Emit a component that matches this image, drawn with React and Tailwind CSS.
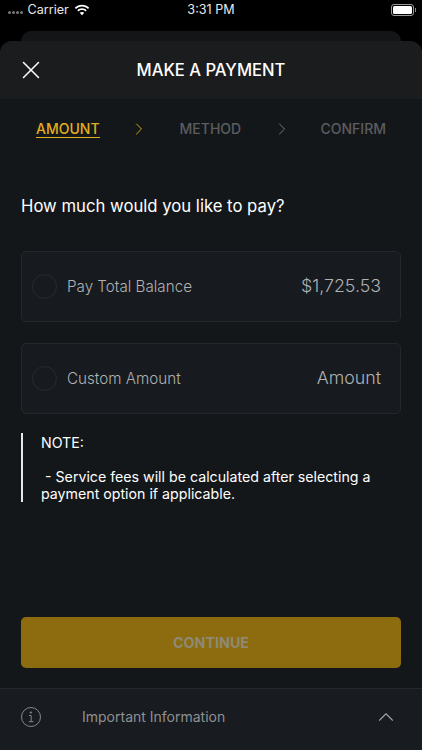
import { X, ChevronRight, ChevronUp } from "lucide-react";

const font = { fontFamily: "Inter, 'Noto Sans', sans-serif" };

const StatusBar = () => (
  <div className="h-[31px] flex items-start pt-[4px] pl-[8px] pr-[6px] relative text-white text-[12.6px] shrink-0">
    <div className="h-[12px] flex items-center gap-[1.5px] mr-[5px] pt-[5px]">
      {[0, 1, 2, 3].map((i) => (
        <span key={i} className="w-[2.5px] h-[2.5px] rounded-full bg-[#777]" />
      ))}
    </div>
    <span className="text-[#e8e8e8] leading-[12px]">Carrier</span>
    <svg width="16" height="12" viewBox="0 0 16 12" className="ml-[5px]" fill="#fff">
      <path d="M8 2.6c2.3 0 4.4.9 6 2.4l1.2-1.3C13.3 1.9 10.8.8 8 .8S2.7 1.9.8 3.7L2 5c1.6-1.5 3.7-2.4 6-2.4z" />
      <path d="M8 6.1c1.3 0 2.5.5 3.5 1.4l1.2-1.3C11.4 5 9.8 4.3 8 4.3S4.6 5 3.3 6.2l1.2 1.3C5.5 6.6 6.7 6.1 8 6.1z" />
      <path d="M8 7.9c-.9 0-1.7.3-2.3.9L8 11.3l2.3-2.5c-.6-.6-1.4-.9-2.3-.9z" />
    </svg>
    <span className="absolute left-0 right-0 text-center text-[#e8e8e8] leading-[12px]">3:31 PM</span>
    <div className="ml-auto flex items-center">
      <div className="w-[23px] h-[12px] rounded-[3px] border border-[#999] p-[1px]">
        <div className="w-full h-full rounded-[1.5px] bg-white" />
      </div>
      <div className="w-[1px] h-[4px] bg-[#888] ml-[1px]" />
    </div>
  </div>
);

const Option = ({ label, value }) => (
  <div className="h-[71px] rounded-[5px] border border-[#24282c] bg-[#171a1e] flex items-center pl-[10px] pr-[19px]">
    <div className="w-[25px] h-[25px] rounded-full border border-[#272b2f]" />
    <span className="ml-[10px] mt-[1px] text-[15.2px] font-light text-[#b0b2b4]">{label}</span>
    <span className="ml-auto text-[17.8px] font-light text-[#b0b2b4]">{value}</span>
  </div>
);

export default function App() {
  return (
    <div className="w-[422px] h-[750px] bg-black flex flex-col overflow-hidden" style={font}>
      <StatusBar />
      <div className="mx-[21px] h-[10px] rounded-t-[10px] bg-[#141516] shrink-0" />
      <div className="flex-1 flex flex-col rounded-t-[12px] overflow-hidden bg-[#14171a]">
        <div className="h-[58px] bg-[#1b1c1d] flex items-center justify-center relative shrink-0">
          <X className="absolute left-[16px] top-[14px] text-white" size={30} strokeWidth={1.2} />
          <span className="text-white text-[16.6px] font-medium">MAKE A PAYMENT</span>
        </div>

        <div className="flex items-center h-[59px] pl-[36px] pr-[36px] text-[14px] font-medium shrink-0">
          <span className="text-[#e3ae1e] border-b border-[#e3ae1e] leading-[17px] mt-[1px]">AMOUNT</span>
          <ChevronRight className="text-[#e3ae1e] ml-[29px]" size={20} strokeWidth={1.1} />
          <span className="text-[#5b5d60] ml-[31px]">METHOD</span>
          <ChevronRight className="text-[#7a7c7e] ml-[31px]" size={20} strokeWidth={1.1} />
          <span className="text-[#5b5d60] ml-auto">CONFIRM</span>
        </div>

        <div className="px-[21px] mt-[36px] text-white text-[16.7px] leading-[24px] shrink-0">
          How much would you like to pay?
        </div>

        <div className="px-[21px] mt-[33px] flex flex-col gap-[21px] shrink-0">
          <Option label="Pay Total Balance" value="$1,725.53" />
          <Option label="Custom Amount" value="Amount" />
        </div>

        <div className="mx-[21px] mt-[19px] border-l-2 border-[#e8e8e8] pl-[18px] text-white text-[14.2px] leading-[17px] h-[69px] pt-[1px] shrink-0">
          <div>NOTE:</div>
          <div className="mt-[17px] whitespace-pre"> - Service fees will be calculated after selecting a</div>
          <div>payment option if applicable.</div>
        </div>

        <div className="px-[21px] mt-[115px] shrink-0">
          <div className="h-[51px] rounded-[5px] bg-[#8c6c0e] flex items-center justify-center text-[14.3px] font-bold text-[#8e8a76]">
            CONTINUE
          </div>
        </div>

        <div className="mt-[20px] flex-1 bg-[#181b1f] border-t border-[#26292c] flex items-center pl-[21px] pr-[23px] pb-[6px]">
          <svg width="20" height="20" viewBox="0 0 20 20" fill="none" stroke="#85878a" strokeWidth="1">
            <circle cx="10" cy="10" r="9.5" />
            <path d="M8 8.5h2.2v6M7.8 14.7h4.6" />
            <circle cx="9.9" cy="5.5" r="0.7" fill="#85878a" />
          </svg>
          <span className="ml-[41px] text-[14px] text-[#8f9194]">Important Information</span>
          <ChevronUp className="ml-auto text-[#a0a2a4]" size={26} strokeWidth={1} />
        </div>
      </div>
    </div>
  );
}
